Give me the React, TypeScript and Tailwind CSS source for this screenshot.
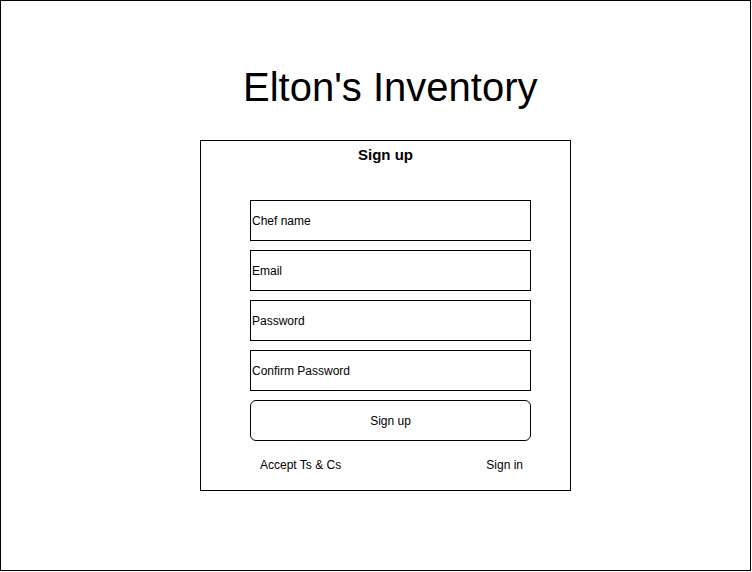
const fields = ["Chef name", "Email", "Password", "Confirm Password"];

export default function App() {
  return (
    <div className="w-[751px] h-[571px] border border-black bg-white flex flex-col font-['Liberation_Sans',Arial,sans-serif] text-black">
      <h1 className="mt-[62px] ml-[242px] text-[40px] leading-[48px]">Elton's Inventory</h1>
      <div className="mt-[29px] ml-[199px] w-[371px] h-[351px] border border-black flex flex-col">
        <h2 className="pt-[4px] text-[15px] leading-[20px] font-bold text-center">Sign up</h2>
        <form className="mt-[35px] ml-[49px] w-[281px] flex flex-col gap-[9px]">
          {fields.map((label) => (
            <div
              key={label}
              className="h-[41px] border border-black flex items-center pl-[1px] text-[12px]"
            >
              {label}
            </div>
          ))}
          <button
            type="button"
            className="h-[41px] border border-black rounded-md text-[12px] flex items-center justify-center"
          >
            Sign up
          </button>
        </form>
        <div className="mt-[17px] ml-[59px] w-[263px] flex justify-between text-[12px] leading-[14px]">
          <span>Accept Ts &amp; Cs</span>
          <span>Sign in</span>
        </div>
      </div>
    </div>
  );
}
